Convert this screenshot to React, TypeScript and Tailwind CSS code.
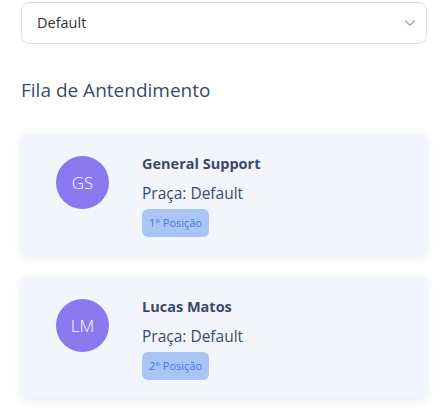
import { ChevronDown } from 'lucide-react';

const queue = [
  { initials: 'GS', name: 'General Support', place: 'Default', position: 1 },
  { initials: 'LM', name: 'Lucas Matos', place: 'Default', position: 2 },
];

const App = () => {
  return (
    <div className="bg-white min-h-screen px-[21px] pt-[2px] text-[#3c4a66]" style={{ fontFamily: '"Open Sans", sans-serif' }}>
      {/* Select */}
      <div className="h-[42px] border border-[#d5e0ec] rounded-lg flex items-center justify-between pl-[15px] pr-[10px]">
        <span className="text-[14.5px] text-[#333]">Default</span>
        <ChevronDown size={18} strokeWidth={1.5} className="text-[#8fa3bf] mr-[-3px]" />
      </div>

      <h2 className="mt-[34px] text-[19px] leading-6 text-[#3c4a66]">Fila de Antendimento</h2>

      {/* Queue */}
      <div className="mt-[32px] flex flex-col gap-[22px]">
        {queue.map((item) => (
          <div key={item.initials} className="h-[121px] bg-[#f2f5fb] rounded-md shadow-[0_2px_8px_rgba(30,50,90,0.10)] flex items-start pl-[35px]">
            <div className="mt-[22px] w-[53px] h-[53px] rounded-full bg-[#8b78ee] flex items-center justify-center text-white text-[17px] font-light">
              {item.initials}
            </div>
            <div className="ml-[33px] pt-[20px] flex flex-col items-start">
              <div className="text-[14.5px] font-bold leading-5">{item.name}</div>
              <div className="text-[15.5px] leading-5 mt-[9px]">Praça: {item.place}</div>
              <span className="mt-[6px] h-[28px] px-[7px] rounded-md bg-[#a9c5f5] text-[#3f7ae6] text-[11px] flex items-center">
                {item.position}° Posição
              </span>
            </div>
          </div>
        ))}
      </div>
    </div>
  );
};

export default App;
